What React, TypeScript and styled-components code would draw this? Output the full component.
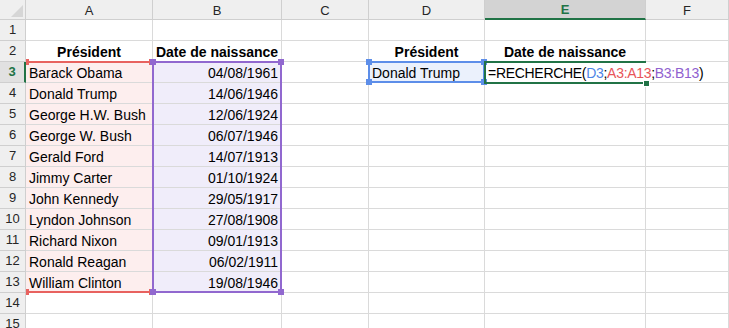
import React from "react";
import styled, {createGlobalStyle} from "styled-components";

const GlobalStyle = createGlobalStyle`
  html, body {
    margin: 0;
    padding: 0;
    background: #fff;
  }
`;

const GRID = "#dadada";
const HEAD_LINE = "#cfcfcf";
const GREEN = "#217346";
const RED = "#e8625f";
const PURPLE = "#9168cf";
const BLUE = "#5d8ee9";

const presidents: [string, string][] = [
    ["Barack Obama", "04/08/1961"],
    ["Donald Trump", "14/06/1946"],
    ["George H.W. Bush", "12/06/1924"],
    ["George W. Bush", "06/07/1946"],
    ["Gerald Ford", "14/07/1913"],
    ["Jimmy Carter", "01/10/1924"],
    ["John Kennedy", "29/05/1917"],
    ["Lyndon Johnson", "27/08/1908"],
    ["Richard Nixon", "09/01/1913"],
    ["Ronald Reagan", "06/02/1911"],
    ["William Clinton", "19/08/1946"],
];

const columns = ["A", "B", "C", "D", "E", "F"];
const ROWS = 15;

const Sheet = styled.div`
  display: grid;
  grid-template-columns: 26px 127px 129px 87px 116px 161px 1fr;
  grid-template-rows: 20px repeat(${ROWS}, 21px);
  width: 729px;
  height: 328px;
  overflow: hidden;
  background: #fff;
  font-family: "Liberation Sans", Arial, sans-serif;
  color: #000;
`;

const Corner = styled.div`
  grid-row: 1;
  grid-column: 1;
  z-index: 3;
  box-sizing: border-box;
  background: #efefef;
  border-right: 1px solid ${HEAD_LINE};
  border-bottom: 1px solid ${HEAD_LINE};
  display: flex;
  align-items: flex-end;
  justify-content: flex-end;
  padding: 0 2px 2px 0;
`;

const CornerMark = styled.span`
  width: 12px;
  height: 12px;
  background: #d6d6d6;
  clip-path: polygon(100% 0, 100% 100%, 0 100%);
`;

const ColHead = styled.div<{ $col: number; $active?: boolean }>`
  grid-row: 1;
  grid-column: ${(p) => p.$col};
  z-index: 3;
  box-sizing: border-box;
  background: ${(p) => (p.$active ? "#d3d3d3" : "#efefef")};
  border-right: 1px solid ${HEAD_LINE};
  border-bottom: ${(p) => (p.$active ? `2px solid ${GREEN}` : `1px solid ${HEAD_LINE}`)};
  color: ${(p) => (p.$active ? GREEN : "#262626")};
  font-weight: ${(p) => (p.$active ? 700 : 400)};
  font-size: 13px;
  display: flex;
  align-items: center;
  justify-content: center;
  padding-top: 1px;
`;

const RowHead = styled.div<{ $row: number; $active?: boolean }>`
  grid-row: ${(p) => p.$row};
  grid-column: 1;
  z-index: 3;
  box-sizing: border-box;
  background: ${(p) => (p.$active ? "#e1e1e1" : "#efefef")};
  border-right: ${(p) => (p.$active ? `2px solid ${GREEN}` : `1px solid ${HEAD_LINE}`)};
  border-bottom: 1px solid ${HEAD_LINE};
  color: ${(p) => (p.$active ? GREEN : "#262626")};
  font-weight: ${(p) => (p.$active ? 700 : 400)};
  font-size: 13px;
  display: flex;
  align-items: flex-end;
  justify-content: center;
  padding-bottom: 3px;
  line-height: 15px;
`;

const Cell = styled.div<{ $row: number; $col: number; $align?: "left" | "center" | "right"; $bold?: boolean; $open?: boolean }>`
  grid-row: ${(p) => p.$row};
  grid-column: ${(p) => p.$col};
  z-index: 1;
  box-sizing: border-box;
  min-width: 0;
  border-right: 1px solid ${(p) => (p.$open ? "transparent" : GRID)};
  border-bottom: 1px solid ${GRID};
  display: flex;
  align-items: flex-end;
  justify-content: ${(p) => (p.$align === "right" ? "flex-end" : p.$align === "center" ? "center" : "flex-start")};
  padding: 0 3px 1px;
  font-size: 14px;
  line-height: 16px;
  font-weight: ${(p) => (p.$bold ? 700 : 400)};
  white-space: nowrap;
`;

const Fill = styled.div<{ $area: string; $color: string }>`
  grid-area: ${(p) => p.$area};
  z-index: 0;
  background: ${(p) => p.$color};
`;

// reference highlight drawn round a range while a formula is edited
const RangeBox = styled.div<{ $area: string; $color: string; $sides?: "all" | "tb" }>`
  grid-area: ${(p) => p.$area};
  z-index: 2;
  position: relative;
  box-sizing: border-box;
  margin: -1px 0 0 -1px;
  border: 2px solid ${(p) => p.$color};
  border-left-color: ${(p) => (p.$sides === "tb" ? "transparent" : p.$color)};
  border-right-color: ${(p) => (p.$sides === "tb" ? "transparent" : p.$color)};
  pointer-events: none;
`;

const Handle = styled.span<{ $color: string; $v: "top" | "bottom"; $h: "left" | "right" }>`
  position: absolute;
  width: 6px;
  height: 6px;
  background: ${(p) => p.$color};
  ${(p) => p.$v}: -4px;
  ${(p) => p.$h}: -4px;
`;

const EditBox = styled.div`
  grid-area: 4 / 6 / 5 / 7;
  z-index: 2;
  position: relative;
  box-sizing: border-box;
  margin: -1px 0 -1px -1px;
  border: 2px solid ${GREEN};
  border-right: none;
  pointer-events: none;
`;

const FillHandle = styled.span`
  position: absolute;
  right: -3px;
  bottom: -4px;
  width: 5px;
  height: 5px;
  background: ${GREEN};
  box-shadow: 0 0 0 1px #fff;
`;

const Formula = styled.span`
  letter-spacing: -0.3px;
`;

const Ref = styled.span<{ $color: string }>`
  color: ${(p) => p.$color};
`;

const Corners: React.FC<{ color: string }> = ({color}) => (
    <>
        <Handle $color={color} $v="top" $h="left"/>
        <Handle $color={color} $v="top" $h="right"/>
        <Handle $color={color} $v="bottom" $h="left"/>
        <Handle $color={color} $v="bottom" $h="right"/>
    </>
);

const cellContent = (row: number, col: string): { text: React.ReactNode; align?: "left" | "center" | "right"; bold?: boolean } | null => {
    if (row === 2) {
        if (col === "A" || col === "D") return {text: "Président", align: "center", bold: true};
        if (col === "B" || col === "E") return {text: "Date de naissance", align: "center", bold: true};
    }
    if (row >= 3 && row <= 13) {
        const [name, date] = presidents[row - 3];
        if (col === "A") return {text: name};
        if (col === "B") return {text: date, align: "right"};
    }
    if (row === 3 && col === "D") return {text: "Donald Trump"};
    if (row === 3 && col === "E") {
        return {
            text: (
                <Formula>
                    =RECHERCHE(<Ref $color="#4f86e6">D3</Ref>;<Ref $color="#e8555a">A3:A13</Ref>;<Ref $color="#9061cf">B3:B13</Ref>)
                </Formula>
            ),
        };
    }
    return null;
};

const App: React.FC = () => {
    const rows = Array.from({length: ROWS}, (_, i) => i + 1);

    return (
        <>
            <GlobalStyle/>
            <Sheet>
                <Fill $area="4 / 2 / 15 / 3" $color="#fdeeee"/>
                <Fill $area="4 / 3 / 15 / 4" $color="#f0edfa"/>
                <Fill $area="4 / 5 / 5 / 6" $color="#ebf1fc"/>

                <Corner><CornerMark/></Corner>
                {columns.map((c, i) => (
                    <ColHead key={c} $col={i + 2} $active={c === "E"}>{c}</ColHead>
                ))}

                {rows.map((r) => (
                    <React.Fragment key={r}>
                        <RowHead $row={r + 1} $active={r === 3}>{r}</RowHead>
                        {columns.map((c, i) => {
                            const content = cellContent(r, c);
                            return (
                                <Cell
                                    key={c}
                                    $row={r + 1}
                                    $col={i + 2}
                                    $align={content?.align}
                                    $bold={content?.bold}
                                    $open={r === 3 && c === "E"}
                                >
                                    {content?.text}
                                </Cell>
                            );
                        })}
                    </React.Fragment>
                ))}

                <RangeBox $area="4 / 2 / 15 / 3" $color={RED} $sides="tb">
                    <Corners color={RED}/>
                </RangeBox>
                <RangeBox $area="4 / 3 / 15 / 4" $color={PURPLE}>
                    <Corners color={PURPLE}/>
                </RangeBox>
                <RangeBox $area="4 / 5 / 5 / 6" $color={BLUE}>
                    <Corners color={BLUE}/>
                </RangeBox>
                <EditBox>
                    <FillHandle/>
                </EditBox>
            </Sheet>
        </>
    );
};

export default App;
